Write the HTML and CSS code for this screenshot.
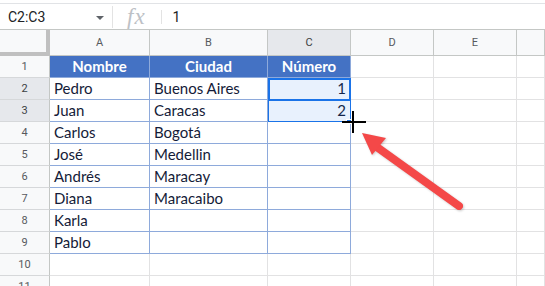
FILE: index.html
```html
<!DOCTYPE html>
<html lang="es">
<head>
    <meta charset="UTF-8">
    <title>Hoja de cálculo</title>
    <link rel="stylesheet" href="styles.css">
</head>
<body>
    <div class="formula-bar">
        <div class="name-box">C2:C3</div>
        <span class="drop"></span>
        <span class="sep"></span>
        <span class="fx">fx</span>
        <span class="sep short"></span>
        <div class="value">1</div>
    </div>

    <div class="sheet">
        <div class="grid">
            <!-- column headers -->
            <div class="corner"></div>
            <div class="ch">A</div>
            <div class="ch">B</div>
            <div class="ch sel">C</div>
            <div class="ch">D</div>
            <div class="ch">E</div>
            <div class="ch"></div>

            <div class="rh">1</div>
            <div class="c th">Nombre</div>
            <div class="c th">Ciudad</div>
            <div class="c th">Número</div>
            <div class="c"></div><div class="c"></div><div class="c"></div>

            <div class="rh sel">2</div>
            <div class="c tb">Pedro</div>
            <div class="c tb">Buenos Aires</div>
            <div class="c tb num">1</div>
            <div class="c"></div><div class="c"></div><div class="c"></div>

            <div class="rh sel">3</div>
            <div class="c tb">Juan</div>
            <div class="c tb">Caracas</div>
            <div class="c tb num">2</div>
            <div class="c"></div><div class="c"></div><div class="c"></div>

            <div class="rh">4</div>
            <div class="c tb">Carlos</div>
            <div class="c tb">Bogotá</div>
            <div class="c tb"></div>
            <div class="c"></div><div class="c"></div><div class="c"></div>

            <div class="rh">5</div>
            <div class="c tb">José</div>
            <div class="c tb">Medellin</div>
            <div class="c tb"></div>
            <div class="c"></div><div class="c"></div><div class="c"></div>

            <div class="rh">6</div>
            <div class="c tb">Andrés</div>
            <div class="c tb">Maracay</div>
            <div class="c tb"></div>
            <div class="c"></div><div class="c"></div><div class="c"></div>

            <div class="rh">7</div>
            <div class="c tb">Diana</div>
            <div class="c tb">Maracaibo</div>
            <div class="c tb"></div>
            <div class="c"></div><div class="c"></div><div class="c"></div>

            <div class="rh">8</div>
            <div class="c tb">Karla</div>
            <div class="c tb"></div>
            <div class="c tb"></div>
            <div class="c"></div><div class="c"></div><div class="c"></div>

            <div class="rh">9</div>
            <div class="c tb">Pablo</div>
            <div class="c tb"></div>
            <div class="c tb"></div>
            <div class="c"></div><div class="c"></div><div class="c"></div>

            <div class="rh">10</div>
            <div class="c"></div><div class="c"></div><div class="c"></div>
            <div class="c"></div><div class="c"></div><div class="c"></div>

            <div class="rh">11</div>
            <div class="c"></div><div class="c"></div><div class="c"></div>
            <div class="c"></div><div class="c"></div><div class="c"></div>
        </div>

        <!-- selection C2:C3 -->
        <div class="range"></div>
        <div class="active"></div>
        <div class="handle"></div>

        <svg class="overlay" width="545" height="256" viewBox="0 30 545 256">
            <!-- crosshair cursor -->
            <line x1="342" y1="122.5" x2="346" y2="122.5" stroke="#f29900" stroke-width="1"/>
            <rect x="352" y="111" width="2" height="22" fill="#000"/>
            <rect x="342" y="121" width="24" height="2" fill="#000"/>
            <!-- arrow -->
            <g class="arrow">
                <line x1="459" y1="206" x2="374" y2="145" stroke="#f44848" stroke-width="8" stroke-linecap="round"/>
                <polygon points="362,133 386,138 372,155" fill="#f44848"/>
            </g>
        </svg>
    </div>
</body>
</html>
```

FILE: styles.css
```css
* {
    box-sizing: border-box;
}

body {
    margin: 0;
    width: 545px;
    height: 286px;
    overflow: hidden;
    background: #fff;
    font-family: Roboto, Arial, sans-serif;
}

.formula-bar {
    display: flex;
    align-items: center;
    height: 27px;
    margin-top: 3px;
    border-top: 1px solid #e1e3e6;
    border-bottom: 1px solid #c4c7c5;
    color: #202124;
    font-size: 14px;
}

.name-box {
    width: 96px;
    padding-left: 8px;
}

.drop {
    width: 0;
    height: 0;
    margin-top: 3px;
    border-left: 4px solid transparent;
    border-right: 4px solid transparent;
    border-top: 4px solid #5f6368;
}

.sep {
    width: 1px;
    height: 22px;
    margin: 0 14px 0 8px;
    background: #e3e3e3;
}

.sep.short {
    height: 14px;
    margin: 0 10px 0 15px;
}

.fx {
    font-family: "Liberation Serif", serif;
    font-style: italic;
    font-size: 23px;
    color: #bdc1c6;
    letter-spacing: 1px;
    line-height: 1;
}

.value {
    padding-left: 1px;
}

.sheet {
    position: relative;
}

.grid {
    display: grid;
    grid-template-columns: 50px 100px 118px 83px 83px 83px 1fr;
    grid-template-rows: 26px repeat(11, 22px);
}

.corner {
    background: #f8f9fa;
    box-shadow: inset -4px -4px 0 #c0c0c0;
}

.ch {
    display: flex;
    align-items: center;
    justify-content: center;
    background: #f8f9fa;
    border-right: 1px solid #c4c7c5;
    border-bottom: 1px solid #c4c7c5;
    color: #575a5e;
    font-size: 11px;
}

.rh {
    display: flex;
    align-items: center;
    justify-content: center;
    background: #f8f9fa;
    border-right: 1px solid #c4c7c5;
    border-bottom: 1px solid #d6d8da;
    color: #575a5e;
    font-size: 11px;
}

.ch.sel,
.rh.sel {
    background: #e6e8ec;
    color: #3c4043;
}

.c {
    display: flex;
    align-items: flex-end;
    padding: 0 4px 2px;
    border-right: 1px solid #e2e2e3;
    border-bottom: 1px solid #e2e2e3;
    font-family: Lato, "Liberation Sans", sans-serif;
    font-size: 15px;
    line-height: 18px;
    color: #141b38;
    white-space: nowrap;
}

.th {
    justify-content: center;
    background: #4472c4;
    border-color: #8eaadb;
    color: #fff;
    font-weight: bold;
}

.tb {
    border-color: #8eaadb;
}

.num {
    justify-content: flex-end;
}

.range {
    position: absolute;
    left: 268px;
    top: 48px;
    width: 83px;
    height: 44px;
    background: rgba(26, 115, 232, 0.1);
    border: 1px solid #1a73e8;
}

.active {
    position: absolute;
    left: 268px;
    top: 48px;
    width: 83px;
    height: 23px;
    border: 2px solid #1a73e8;
}

.handle {
    position: absolute;
    left: 346px;
    top: 89px;
    width: 6px;
    height: 5px;
    background: #1a73e8;
    border: 1px solid #fff;
}

.overlay {
    position: absolute;
    left: 0;
    top: 0;
}

.arrow {
    filter: drop-shadow(1px 1px 1px rgba(0, 0, 0, 0.2));
}
```
